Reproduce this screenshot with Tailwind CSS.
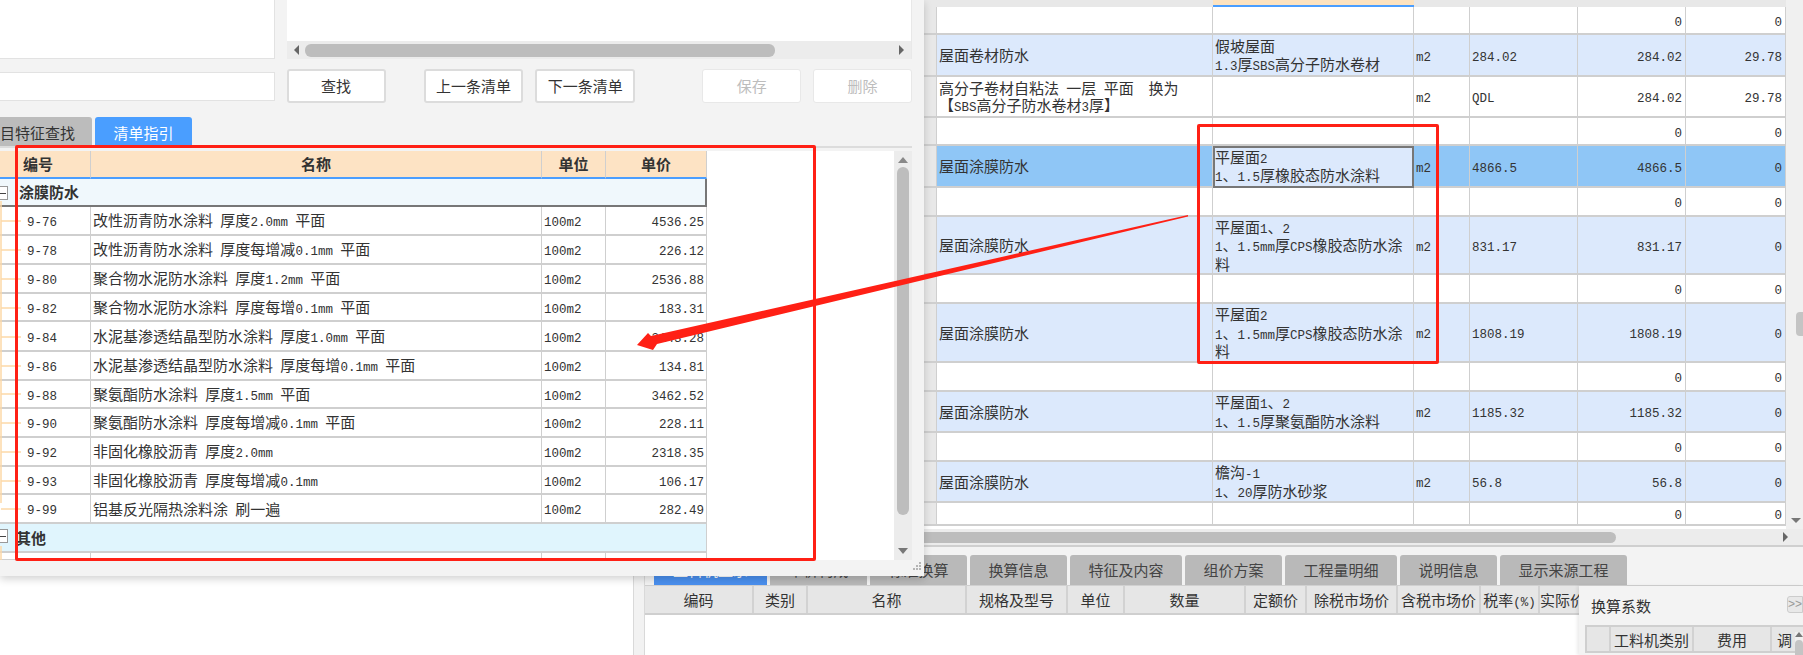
<!DOCTYPE html>
<html lang="zh">
<head>
<meta charset="utf-8">
<title>清单指引</title>
<script src="https://cdn.jsdelivr.net/npm/@tailwindcss/browser@4"></script>
</head>
<body>
<div class="relative w-[1803px] h-[655px] overflow-hidden bg-white text-[15px] leading-[17.5px] [word-spacing:4px] text-[#333] font-['Noto_Sans_CJK_SC',sans-serif] [&_u]:no-underline [&_u]:leading-none [&_u]:text-[12.5px] [&_u]:font-['Liberation_Mono',monospace]">

  <!-- main quantity table -->
  <div class="flex h-[547px] pl-[924px]">
    <div class="w-[862px] h-[529px] flex-none">
      <div class="flex h-[7px] bg-[#e8e8e8]">
        <div class="w-[289px]"></div>
        <div class="w-[201px] bg-[#fde3c0] border-b-2 border-[#4a9eff]"></div>
      </div>
      <table class="table-fixed w-[862px] border-separate border-spacing-0 [&_td]:border-r [&_td]:border-b-2 [&_td]:border-[#cfcfcf] [&_td]:px-[2px] [&_td]:align-middle [&_td:first-child]:bg-[#e8e8e8] [&_td:nth-child(n+6)]:text-right [&_td:nth-child(n+6)]:pr-[3px]">
        <colgroup><col class="w-[13px]"><col class="w-[276px]"><col class="w-[201px]"><col class="w-[56px]"><col class="w-[108px]"><col class="w-[108px]"><col class="w-[100px]"></colgroup>
        <tr class="h-[28px]"><td></td><td></td><td></td><td></td><td></td><td><u>0</u></td><td><u>0</u></td></tr>
        <tr class="h-[42px] bg-[#dce9fc]"><td></td><td>屋面卷材防水</td><td>假坡屋面<br><u>1.3</u>厚<u>SBS</u>高分子防水卷材</td><td><u>m2</u></td><td><u>284.02</u></td><td><u>284.02</u></td><td><u>29.78</u></td></tr>
        <tr class="h-[41px]"><td></td><td>高分子卷材自粘法 一层 平面&nbsp;&nbsp;换为<br>【<u>SBS</u>高分子防水卷材<u>3</u>厚】</td><td></td><td><u>m2</u></td><td><u>QDL</u></td><td><u>284.02</u></td><td><u>29.78</u></td></tr>
        <tr class="h-[28px]"><td></td><td></td><td></td><td></td><td></td><td><u>0</u></td><td><u>0</u></td></tr>
        <tr class="h-[42px] bg-[#8fc6f6]"><td></td><td>屋面涂膜防水</td><td class="bg-[#dce9fc] outline-2 -outline-offset-2 outline-[#777]">平屋面<u>2</u><br><u>1</u>、<u>1.5</u>厚橡胶态防水涂料</td><td><u>m2</u></td><td><u>4866.5</u></td><td><u>4866.5</u></td><td><u>0</u></td></tr>
        <tr class="h-[29px]"><td></td><td></td><td></td><td></td><td></td><td><u>0</u></td><td><u>0</u></td></tr>
        <tr class="h-[58px] bg-[#dce9fc]"><td></td><td>屋面涂膜防水</td><td>平屋面<u>1</u>、<u>2</u><br><u>1</u>、<u>1.5mm</u>厚<u>CPS</u>橡胶态防水涂料</td><td><u>m2</u></td><td><u>831.17</u></td><td><u>831.17</u></td><td><u>0</u></td></tr>
        <tr class="h-[29px]"><td></td><td></td><td></td><td></td><td></td><td><u>0</u></td><td><u>0</u></td></tr>
        <tr class="h-[59px] bg-[#dce9fc]"><td></td><td>屋面涂膜防水</td><td>平屋面<u>2</u><br><u>1</u>、<u>1.5mm</u>厚<u>CPS</u>橡胶态防水涂料</td><td><u>m2</u></td><td><u>1808.19</u></td><td><u>1808.19</u></td><td><u>0</u></td></tr>
        <tr class="h-[29px]"><td></td><td></td><td></td><td></td><td></td><td><u>0</u></td><td><u>0</u></td></tr>
        <tr class="h-[41px] bg-[#dce9fc]"><td></td><td>屋面涂膜防水</td><td>平屋面<u>1</u>、<u>2</u><br><u>1</u>、<u>1.5</u>厚聚氨酯防水涂料</td><td><u>m2</u></td><td><u>1185.32</u></td><td><u>1185.32</u></td><td><u>0</u></td></tr>
        <tr class="h-[29px]"><td></td><td></td><td></td><td></td><td></td><td><u>0</u></td><td><u>0</u></td></tr>
        <tr class="h-[41px] bg-[#dce9fc]"><td></td><td>屋面涂膜防水</td><td>檐沟<u>-1</u><br><u>1</u>、<u>20</u>厚防水砂浆</td><td><u>m2</u></td><td><u>56.8</u></td><td><u>56.8</u></td><td><u>0</u></td></tr>
        <tr class="h-[23px] [&_td]:border-b-0"><td></td><td></td><td></td><td></td><td></td><td><u>0</u></td><td><u>0</u></td></tr>
      </table>
    </div>
    <!-- vertical scrollbar -->
    <div class="relative w-[17px] h-[529px] bg-[#f0f0f0]">
      <div class="absolute left-[10px] top-[312px] w-[7px] h-[24px] rounded-l-[4px] bg-[#c4c4c4]"></div>
      <div class="absolute left-[5px] top-[518px] w-0 h-0 border-x-[5px] border-x-transparent border-t-[5px] border-t-[#777]"></div>
    </div>
  </div>

  <!-- horizontal scrollbar of main table -->
  <div class="absolute left-[924px] right-0 top-[529px] h-[18px] bg-[#ececec] border-b-2 border-[#cfcfcf]">
    <div class="absolute left-0 top-[3px] w-[692px] h-[11px] rounded-r-[6px] bg-[#bdbdbd]"></div>
    <div class="absolute left-[859px] top-[3px] w-0 h-0 border-y-[5px] border-y-transparent border-l-[5px] border-l-[#666]"></div>
  </div>

  <!-- lower pane -->
  <div class="absolute left-0 right-0 top-[547px] h-[108px] flex">
    <div class="w-[633px] flex-none bg-white"></div>
    <div class="w-[12px] flex-none bg-[#f2f2f2] border-x border-[#d9d9d9]"></div>
    <div class="flex-1 bg-white">
      <div class="h-[39px] bg-[#f3f3f3] pl-[9px] pt-[8px] flex gap-[3px] items-stretch text-[#444] border-b border-[#d0d0d0]">
        <div class="w-[113px] bg-[#4a90ef] rounded-t-[3px] flex items-center justify-center text-white">工料机显示</div>
        <div class="w-[97px] bg-[#b9b9b9] rounded-t-[3px] flex items-center justify-center">单价构成</div>
        <div class="w-[97px] bg-[#b9b9b9] rounded-t-[3px] flex items-center justify-center">标准换算</div>
        <div class="w-[97px] bg-[#b9b9b9] rounded-t-[3px] flex items-center justify-center">换算信息</div>
        <div class="w-[112px] bg-[#b9b9b9] rounded-t-[3px] flex items-center justify-center">特征及内容</div>
        <div class="w-[97px] bg-[#b9b9b9] rounded-t-[3px] flex items-center justify-center">组价方案</div>
        <div class="w-[112px] bg-[#b9b9b9] rounded-t-[3px] flex items-center justify-center">工程量明细</div>
        <div class="w-[97px] bg-[#b9b9b9] rounded-t-[3px] flex items-center justify-center">说明信息</div>
        <div class="w-[127px] bg-[#b9b9b9] rounded-t-[3px] flex items-center justify-center">显示来源工程</div>
      </div>
      <div class="flex h-[29px] bg-[#e6e6e6] border-b-2 border-[#cfcfcf] [&>div]:border-r-2 [&>div]:border-[#d2d2d2] [&>div]:text-center [&>div]:leading-[27px] [&>div]:whitespace-nowrap [&>div]:overflow-hidden">
        <div class="w-[109px]">编码</div>
        <div class="w-[54px]">类别</div>
        <div class="w-[159px]">名称</div>
        <div class="w-[101px]">规格及型号</div>
        <div class="w-[57px]">单位</div>
        <div class="w-[121px]">数量</div>
        <div class="w-[61px]">定额价</div>
        <div class="w-[91px]">除税市场价</div>
        <div class="w-[83px]">含税市场价</div>
        <div class="w-[59px]">税率<u>(%)</u></div>
        <div class="w-[45px] !text-left">实际价</div>
      </div>
    </div>
  </div>

  <!-- side panel: 换算系数 -->
  <div class="absolute left-[1579px] top-[586px] w-[224px] h-[69px] bg-[#f3f3f3] shadow-[-2px_0_3px_rgba(0,0,0,0.08)] pl-[6px]">
    <div class="flex items-center justify-between h-[39px] pl-[6px]">
      <span>换算系数</span>
      <span class="w-[16px] h-[17px] mt-[-2px] border border-[#ccc] rounded-l-[3px] bg-[#e8e8e8] text-[#999] text-[12px] leading-[15px] font-['Liberation_Sans',sans-serif]">&gt;&gt;</span>
    </div>
    <div class="flex h-[28px] w-[218px] bg-[#e6e6e6] border-y-2 border-l-2 border-[#cfcfcf] [&>div]:border-r-2 [&>div]:border-[#d2d2d2] [&>div]:text-center [&>div]:leading-[25px] [&>div]:whitespace-nowrap [&>div]:overflow-hidden">
      <div class="w-[24px]"></div>
      <div class="w-[83px]">工料机类别</div>
      <div class="w-[78px]">费用</div>
      <div class="w-[31px] !border-r-0 !text-left pl-[5px]">调</div>
    </div>
    <div class="absolute left-[216px] top-[46px] w-[8px] h-[23px] bg-[#f0f0f0]">
      <div class="w-0 h-0 border-x-[4px] border-x-transparent border-b-[5px] border-b-[#777]"></div>
      <div class="mt-[3px] h-[20px] w-[8px] rounded-t-[4px] bg-[#c4c4c4]"></div>
    </div>
  </div>

  <!-- floating dialog -->
  <div class="absolute left-0 top-0 w-[924px] h-[576px] bg-[#f3f3f3] shadow-[0_3px_8px_rgba(0,0,0,0.18)] pr-[12px]">
    <div class="flex gap-[12px] h-[59px]">
      <div class="w-[275px] bg-white border border-t-0 border-l-0 border-[#e2e2e2]"></div>
      <div class="w-[625px] flex flex-col bg-white border-r border-[#e8e8e8]">
        <div class="flex-1"></div>
        <div class="flex items-center h-[18px] bg-[#ececec] pl-[7px] pr-[7px]">
          <div class="w-0 h-0 border-y-[5px] border-y-transparent border-r-[5px] border-r-[#666]"></div>
          <div class="ml-[6px] w-[470px] h-[13px] rounded-[6px] bg-[#bdbdbd]"></div>
          <div class="ml-auto w-0 h-0 border-y-[5px] border-y-transparent border-l-[5px] border-l-[#666]"></div>
        </div>
      </div>
    </div>
    <div class="flex items-center gap-[12px] mt-[10px] h-[34px]">
      <div class="w-[275px] h-[29px] bg-white border border-l-0 border-[#e2e2e2]"></div>
      <button class="w-[99px] h-[34px] bg-white border-2 border-[#dcdcdc] rounded-[3px]">查找</button>
      <button class="ml-[26px] w-[100px] h-[34px] bg-white border-2 border-[#dcdcdc] rounded-[3px]">上一条清单</button>
      <button class="w-[100px] h-[34px] bg-white border-2 border-[#dcdcdc] rounded-[3px]">下一条清单</button>
      <button class="ml-[55px] w-[99px] h-[34px] bg-white border border-[#e8e8e8] rounded-[3px] text-[#bdbdbd]">保存</button>
      <button class="w-[99px] h-[34px] bg-white border border-[#e8e8e8] rounded-[3px] text-[#bdbdbd]">删除</button>
    </div>
    <div class="flex gap-[3px] mt-[14px] h-[31px] border-b-2 border-[#dcdcdc]">
      <div class="w-[92px] bg-[#bcbcbc] rounded-tr-[3px] leading-[31px] text-right pr-[18px] overflow-hidden whitespace-nowrap">目特征查找</div>
      <div class="w-[97px] bg-[#4a9eff] rounded-t-[3px] leading-[31px] text-center text-white">清单指引</div>
    </div>
    <!-- guide table -->
    <div class="relative mt-[3px] h-[409px] w-[912px] bg-white overflow-hidden">
      <table class="table-fixed w-[707px] border-separate border-spacing-0 [&_td]:border-r [&_td]:border-b-2 [&_td]:border-[#cfcfcf] [&_td]:px-[2px] [&_td]:align-middle">
        <colgroup><col class="w-[91px]"><col class="w-[451px]"><col class="w-[64px]"><col class="w-[101px]"></colgroup>
        <tr class="h-[28px] bg-[#fde3c4] font-bold text-center [&_td]:border-b-2 [&_td]:border-b-[#4a9eff]"><td class="!text-left !pl-[23px]">编号</td><td>名称</td><td>单位</td><td>单价</td></tr>
        <tr class="h-[28px] bg-[#f0f8fc] font-bold"><td colspan="4" class="!pl-[19px] !border-b-[#777] !border-r-2 !border-r-[#777]">涂膜防水</td></tr>
        <tr class="h-[29px]"><td class="!pl-[27px]"><u>9-76</u></td><td>改性沥青防水涂料 厚度<u>2.0mm</u> 平面</td><td><u>100m2</u></td><td class="text-right"><u>4536.25</u></td></tr>
        <tr class="h-[29px]"><td class="!pl-[27px]"><u>9-78</u></td><td>改性沥青防水涂料 厚度每增减<u>0.1mm</u> 平面</td><td><u>100m2</u></td><td class="text-right"><u>226.12</u></td></tr>
        <tr class="h-[29px]"><td class="!pl-[27px]"><u>9-80</u></td><td>聚合物水泥防水涂料 厚度<u>1.2mm</u> 平面</td><td><u>100m2</u></td><td class="text-right"><u>2536.88</u></td></tr>
        <tr class="h-[28px]"><td class="!pl-[27px]"><u>9-82</u></td><td>聚合物水泥防水涂料 厚度每增<u>0.1mm</u> 平面</td><td><u>100m2</u></td><td class="text-right"><u>183.31</u></td></tr>
        <tr class="h-[30px]"><td class="!pl-[27px]"><u>9-84</u></td><td>水泥基渗透结晶型防水涂料 厚度<u>1.0mm</u> 平面</td><td><u>100m2</u></td><td class="text-right"><u>3143.28</u></td></tr>
        <tr class="h-[29px]"><td class="!pl-[27px]"><u>9-86</u></td><td>水泥基渗透结晶型防水涂料 厚度每增<u>0.1mm</u> 平面</td><td><u>100m2</u></td><td class="text-right"><u>134.81</u></td></tr>
        <tr class="h-[28px]"><td class="!pl-[27px]"><u>9-88</u></td><td>聚氨酯防水涂料 厚度<u>1.5mm</u> 平面</td><td><u>100m2</u></td><td class="text-right"><u>3462.52</u></td></tr>
        <tr class="h-[29px]"><td class="!pl-[27px]"><u>9-90</u></td><td>聚氨酯防水涂料 厚度每增减<u>0.1mm</u> 平面</td><td><u>100m2</u></td><td class="text-right"><u>228.11</u></td></tr>
        <tr class="h-[29px]"><td class="!pl-[27px]"><u>9-92</u></td><td>非固化橡胶沥青 厚度<u>2.0mm</u></td><td><u>100m2</u></td><td class="text-right"><u>2318.35</u></td></tr>
        <tr class="h-[28px]"><td class="!pl-[27px]"><u>9-93</u></td><td>非固化橡胶沥青 厚度每增减<u>0.1mm</u></td><td><u>100m2</u></td><td class="text-right"><u>106.17</u></td></tr>
        <tr class="h-[29px]"><td class="!pl-[27px]"><u>9-99</u></td><td>铝基反光隔热涂料涂 刷一遍</td><td><u>100m2</u></td><td class="text-right"><u>282.49</u></td></tr>
        <tr class="h-[29px] bg-[#e0f5fd] font-bold"><td colspan="4" class="!pl-[16px]">其他</td></tr>
        <tr class="h-[8px]"><td></td><td></td><td></td><td></td></tr>
      </table>
      <!-- tree guides -->
      <svg class="absolute left-0 top-0" width="22" height="409" fill="none" stroke="#fdd9a8" stroke-width="1.5">
        <path d="M1 50V352M1 70H21M1 99H21M1 128H21M1 157H21M1 186H21M1 215H21M1 243H21M1 272H21M1 301H21M1 330H21M1 358H21M1 395V409"/>
      </svg>
      <div class="absolute left-0 top-[35px] w-[8px] h-[14px] bg-white border border-l-0 border-[#999] flex items-center"><div class="w-[6px] h-px bg-[#444]"></div></div>
      <div class="absolute left-0 top-[378px] w-[8px] h-[14px] bg-white border border-l-0 border-[#999] flex items-center"><div class="w-[6px] h-px bg-[#444]"></div></div>
      <!-- dialog scrollbar -->
      <div class="absolute right-0 top-0 bottom-0 w-[18px] bg-[#ececec]">
        <div class="ml-[4px] mt-[6px] w-0 h-0 border-x-[5px] border-x-transparent border-b-[6px] border-b-[#888]"></div>
        <div class="ml-[3px] mt-[4px] w-[12px] h-[348px] rounded-[6px] bg-[#bdbdbd]"></div>
        <div class="absolute left-[4px] bottom-[6px] w-0 h-0 border-x-[5px] border-x-transparent border-t-[6px] border-t-[#777]"></div>
      </div>
    </div>
    <!-- resize grip -->
    <svg class="absolute right-[2px] bottom-[5px]" width="9" height="9" fill="#b5b5b5"><rect x="6" y="0" width="2" height="2"/><rect x="3" y="3" width="2" height="2"/><rect x="6" y="3" width="2" height="2"/><rect x="0" y="6" width="2" height="2"/><rect x="3" y="6" width="2" height="2"/><rect x="6" y="6" width="2" height="2"/></svg>
  </div>

  <!-- red annotations -->
  <div class="absolute left-[15px] top-[145px] w-[801px] h-[416px] border-[3px] border-[#ff2015] rounded-[2px]"></div>
  <div class="absolute left-[1197px] top-[124px] w-[242px] h-[240px] border-[3px] border-[#ff2015] rounded-[2px]"></div>
  <svg class="absolute left-0 top-0" width="1803" height="655">
    <polygon fill="#ff2015" points="1188,215 1188,216.5 657,344 653,350 637,345 648,333 651,336"/>
  </svg>
</div>
</body>
</html>
